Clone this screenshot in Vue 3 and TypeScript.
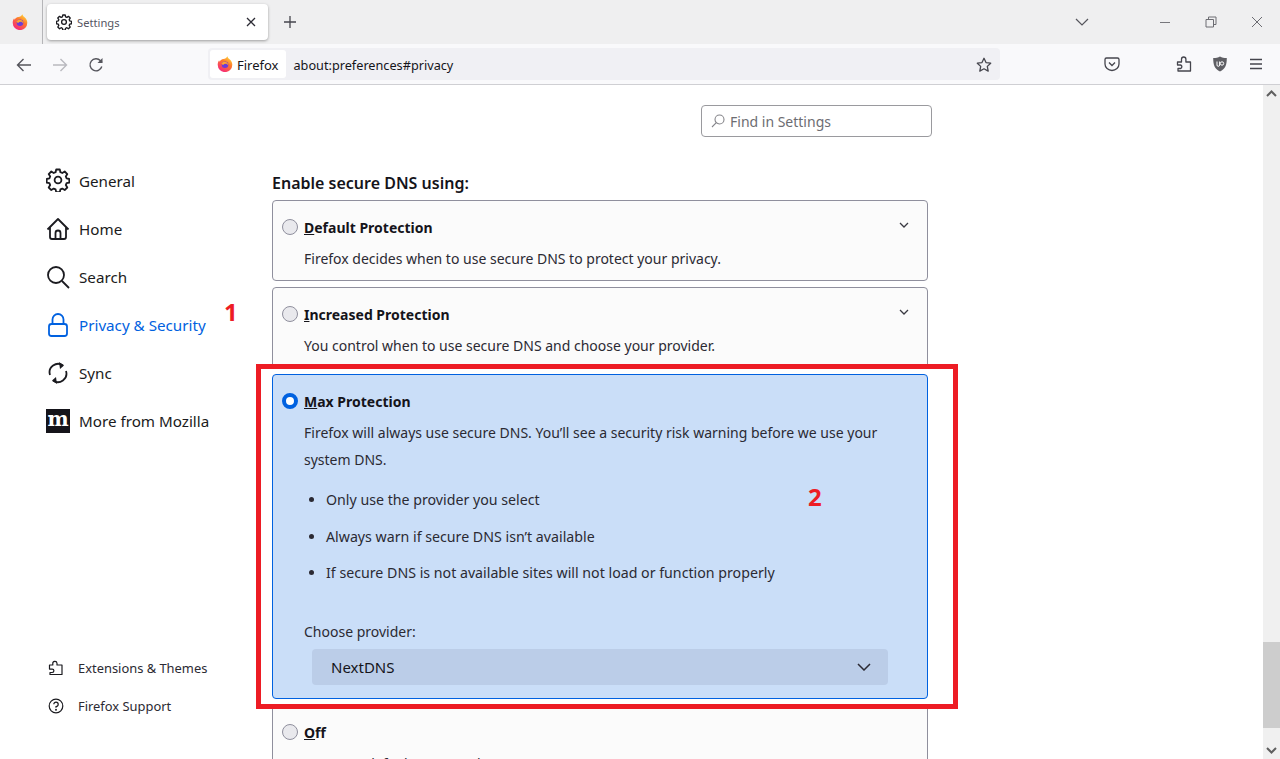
<script setup lang="ts">
const navItems = [
  { label: 'General', icon: 'gear' },
  { label: 'Home', icon: 'home' },
  { label: 'Search', icon: 'search' },
  { label: 'Privacy & Security', icon: 'lock', active: true },
  { label: 'Sync', icon: 'sync' },
  { label: 'More from Mozilla', icon: 'moz' }
]

const bullets = [
  'Only use the provider you select',
  'Always warn if secure DNS isn’t available',
  'If secure DNS is not available sites will not load or function properly'
]

const gearPath = 'M10.2 1.5h3.6l.6 2.7 1.9.8 2.4-1.5 2.6 2.6-1.5 2.4.8 1.9 2.7.6v3.6l-2.7.6-.8 1.9 1.5 2.4-2.6 2.6-2.4-1.5-1.9.8-.6 2.7h-3.6l-.6-2.7-1.9-.8-2.4 1.5-2.6-2.6 1.5-2.4-.8-1.9-2.7-.6v-3.6l2.7-.6.8-1.9-1.5-2.4 2.6-2.6 2.4 1.5 1.9-.8z'
</script>

<template>
  <div class="window">
    <header class="tabbar">
      <div class="tab-start">
        <svg class="fx" width="16" height="16" viewBox="0 0 16 16"><use href="#fx-logo" /></svg>
      </div>
      <div class="tab">
        <svg width="16" height="16" viewBox="0 0 24 24" fill="none" stroke="#1b1b20" stroke-width="2"><path :d="gearPath" stroke-linejoin="round" /><circle cx="12" cy="12" r="3.6" /></svg>
        <span class="tab-title">Settings</span>
        <svg class="tab-close" width="12" height="12" viewBox="0 0 12 12" stroke="#2b2a33" stroke-width="1.3"><path d="M2 2l8 8M10 2l-8 8" /></svg>
      </div>
      <svg class="new-tab" width="14" height="14" viewBox="0 0 14 14" stroke="#45454d" stroke-width="1.3"><path d="M7 1v12M1 7h12" /></svg>
      <div class="tab-spacer"></div>
      <svg class="tab-list" width="14" height="8" viewBox="0 0 14 8" fill="none" stroke="#55555c" stroke-width="1.2"><path d="M1 1l6 6 6-6" /></svg>
      <div class="win-controls">
        <svg width="12" height="12" viewBox="0 0 12 12" stroke="#77777c"><path d="M1 6.5h10" /></svg>
        <svg width="12" height="12" viewBox="0 0 12 12" fill="none" stroke="#6c6c72"><path d="M1 3.5h7.5V11H1zM3.5 3.5V1H11v7.500H8.500" /></svg>
        <svg width="12" height="12" viewBox="0 0 12 12" stroke="#6c6c72"><path d="M1 1l10 10M11 1L1 11" /></svg>
      </div>
    </header>

    <div class="toolbar">
      <svg class="tool first" width="16" height="16" viewBox="0 0 16 16" fill="none" stroke="#55555c" stroke-width="1.400"><path d="M15 8H1.500M7.500 2L1.500 8l6 6" /></svg>
      <svg class="tool" width="16" height="16" viewBox="0 0 16 16" fill="none" stroke="#b9b9bf" stroke-width="1.400"><path d="M1 8h13.500M8.500 2l6 6-6 6" /></svg>
      <svg class="tool" width="16" height="16" viewBox="0 0 16 16" fill="none" stroke="#55555c" stroke-width="1.400"><path d="M13.800 9.500A6 6 0 1 1 12.500 3.800L14 5.500" /><path d="M14.500 1v5h-5" fill="#55555c" stroke="none" /></svg>
      <div class="urlbar">
        <div class="identity">
          <svg width="16" height="16" viewBox="0 0 16 16"><use href="#fx-logo" /></svg>
          <span class="identity-label">Firefox</span>
        </div>
        <span class="url">about:preferences#privacy</span>
        <svg class="star" width="16" height="16" viewBox="0 0 16 16" fill="none" stroke="#45454d" stroke-width="1.300" stroke-linejoin="round"><path d="M8 1.300l2 4.300 4.700.6-3.400 3.200.9 4.700L8 11.800l-4.200 2.300.9-4.700L1.300 6.200 6 5.600z" /></svg>
      </div>
      <div class="toolbar-right">
        <svg class="pocket" width="16" height="16" viewBox="0 0 16 16" fill="none" stroke="#45454d" stroke-width="1.300"><path d="M2.500 2h11A1.500 1.500 0 0 1 15 3.500V8a7 6.500 0 0 1-14 0V3.500A1.500 1.500 0 0 1 2.500 2z" /><path d="M5 6.500l3 3 3-3" /></svg>
        <svg class="puzzle" width="16" height="16" viewBox="0 0 16 16" fill="none" stroke="#45454d" stroke-width="1.300" stroke-linejoin="round"><path d="M1.500 6h4V3.200a2.200 2.200 0 0 1 4.400 0V6h4.600v9H2v-2.500h2.500a1.800 1.800 0 0 0 0-3.500H1.500z" /></svg>
        <svg class="ublock" width="16" height="16" viewBox="0 0 16 16"><path d="M8 .5c2 1.200 4 1.600 6.800 1.600 0 7-1.500 11-6.800 13.400C2.700 13.100 1.200 9.100 1.200 2.100 4 2.100 6 1.700 8 .5z" fill="#5f5f64" /><path d="M5 5.500V9a1.300 1.300 0 0 0 2.600 0V5.500" fill="none" stroke="#fff" stroke-width="1" /><circle cx="10" cy="7.500" r="1.700" fill="none" stroke="#fff" stroke-width="1" /></svg>
        <svg class="menu" width="14" height="12" viewBox="0 0 14 12" stroke="#45454d" stroke-width="1.300"><path d="M1 1.500h12M1 6h12M1 10.500h12" /></svg>
      </div>
    </div>

    <div class="viewport">
      <div class="page">
        <aside class="sidebar">
          <nav class="nav">
            <div v-for="item in navItems" :key="item.label" :class="['nav-item', { active: item.active }]">
              <svg v-if="item.icon === 'gear'" class="gear" width="24" height="24" viewBox="0 0 24 24" fill="none" stroke="#1b1b20" stroke-width="1.800"><path :d="gearPath" stroke-linejoin="round" /><circle cx="12" cy="12" r="3.400" /></svg>
              <svg v-else-if="item.icon === 'home'" width="24" height="24" viewBox="0 0 24 24" fill="none" stroke="#1b1b20" stroke-width="1.800" stroke-linejoin="round"><path d="M1.500 12.500L12 2l10.500 10.500M4 10v10a2 2 0 0 0 2 2h12a2 2 0 0 0 2-2V10" /><path d="M9.500 22v-6a2.500 2.500 0 0 1 5 0v6" /></svg>
              <svg v-else-if="item.icon === 'search'" width="24" height="24" viewBox="0 0 24 24" fill="none" stroke="#1b1b20" stroke-width="1.800"><circle cx="10" cy="10" r="8" /><path d="M16 16l7 7" /></svg>
              <svg v-else-if="item.icon === 'lock'" width="24" height="24" viewBox="0 0 24 24" fill="none" stroke="#0061e0" stroke-width="1.800"><rect x="3" y="11" width="18" height="12" rx="2.500" /><path d="M6.500 11V6.500a5.500 5.500 0 0 1 11 0V11" /></svg>
              <svg v-else-if="item.icon === 'sync'" width="24" height="24" viewBox="0 0 24 24" fill="none" stroke="#1b1b20" stroke-width="1.800"><path d="M4 14a8.500 8.500 0 0 1 13-9.500M20 10a8.500 8.500 0 0 1-13 9.500" /><path d="M13 1l5 3.500-4 3.500zM11 23l-5-3.500 4-3.500z" fill="#1b1b20" stroke="none" /></svg>
              <span v-else class="moz-icon">m</span>
              <span>{{ item.label }}</span>
            </div>
          </nav>
          <div class="footer-links">
            <div class="foot-item">
              <svg width="16" height="16" viewBox="0 0 16 16" fill="none" stroke="#1b1b20" stroke-width="1.200" stroke-linejoin="round"><path d="M1.500 5h3.300V3.800a2.100 2.100 0 1 1 4.200-.5V5H14v9.500H2V12.500h2.200a1.700 1.700 0 0 0 0-3.400H1.500z" /></svg>
              <span>Extensions &amp; Themes</span>
            </div>
            <div class="foot-item">
              <svg width="16" height="16" viewBox="0 0 16 16" fill="none" stroke="#1b1b20" stroke-width="1.200"><circle cx="8" cy="8" r="6.800" /><path d="M5.800 6.300A2.200 2.200 0 1 1 8 8.500v1.200" /><circle cx="8" cy="11.800" r=".4" fill="#1b1b20" /></svg>
              <span>Firefox Support</span>
            </div>
          </div>
          <span class="callout callout-one">1</span>
        </aside>

        <main class="content">
          <div class="search-row">
            <div class="search-box">
              <svg width="14" height="14" viewBox="0 0 14 14" fill="none" stroke="#85858a" stroke-width="1.100"><circle cx="8.500" cy="5.500" r="4.500" /><path d="M5.300 8.700L1 13" /></svg>
              <span>Find in Settings</span>
            </div>
          </div>
          <h2 class="section-title">Enable secure DNS using:</h2>

          <section class="option">
            <div class="option-head">
              <span class="radio"></span>
              <span class="option-title"><u>D</u>efault Protection</span>
              <svg class="chev" width="10" height="6" viewBox="0 0 10 6" fill="none" stroke="#3a3a42" stroke-width="1.300"><path d="M1 1l4 4 4-4" /></svg>
            </div>
            <p class="option-text">Firefox decides when to use secure DNS to protect your privacy.</p>
          </section>

          <section class="option">
            <div class="option-head">
              <span class="radio"></span>
              <span class="option-title"><u>I</u>ncreased Protection</span>
              <svg class="chev" width="10" height="6" viewBox="0 0 10 6" fill="none" stroke="#3a3a42" stroke-width="1.300"><path d="M1 1l4 4 4-4" /></svg>
            </div>
            <p class="option-text">You control when to use secure DNS and choose your provider.</p>
          </section>

          <section class="option selected">
            <div class="option-head">
              <span class="radio on"></span>
              <span class="option-title"><u>M</u>ax Protection</span>
            </div>
            <p class="option-text">Firefox will always use secure DNS. You’ll see a security risk warning before we use your system DNS.</p>
            <ul class="bullets">
              <li v-for="b in bullets" :key="b">{{ b }}</li>
            </ul>
            <div class="provider-label">Choose provider:</div>
            <div class="select">
              <span>NextDNS</span>
              <svg width="14" height="8" viewBox="0 0 14 8" fill="none" stroke="#2b2a33" stroke-width="1.500"><path d="M1 1l6 6 6-6" /></svg>
            </div>
          </section>

          <section class="option">
            <div class="option-head">
              <span class="radio"></span>
              <span class="option-title"><u>O</u>ff</span>
            </div>
            <p class="option-text">Use your default DNS resolver</p>
          </section>

          <div class="red-box"></div>
          <span class="callout callout-two">2</span>
        </main>
      </div>

      <div class="scrollbar">
        <svg width="11" height="7" viewBox="0 0 11 7" fill="none" stroke="#5f5f5f" stroke-width="2"><path d="M1 6l4.500-4.500L10 6" /></svg>
        <div class="scroll-track"><div class="scroll-thumb"></div></div>
        <svg width="11" height="7" viewBox="0 0 11 7" fill="none" stroke="#5f5f5f" stroke-width="2"><path d="M1 1l4.500 4.500L10 1" /></svg>
      </div>
    </div>

    <svg class="defs" width="0" height="0">
      <defs>
        <linearGradient id="fx-outer" x1="0.8" y1="0.05" x2="0.25" y2="0.95">
          <stop offset="0" stop-color="#ffd23a" />
          <stop offset="0.4" stop-color="#ff7a2b" />
          <stop offset="1" stop-color="#f5277a" />
        </linearGradient>
        <symbol id="fx-logo" viewBox="0 0 16 16">
          <path d="M10.500.300c.1 1.700 1.300 2.300 2.300 3.200 1 1 2.500 2.600 2.500 5.300a7.300 7.300 0 1 1-14.600 0c0-2 .6-3.500 1.400-4.600l.4 1.500C3.300 4.500 4.600 3.300 6.400 3.100 8 2.900 9.600 1.800 10.500.300z" fill="url(#fx-outer)" />
          <circle cx="8" cy="8.700" r="3.300" fill="#6d3bd8" />
          <path d="M4.500 7.500c1-1.800 3.500-2.400 5.200-1.200 1.100.8 1.500 1.900 1.400 3-.5-1-1.500-1.600-2.600-1.500-1 0-1.800.4-2.300 1.100-.6-.1-1.300-.6-1.700-1.400z" fill="#ffa52e" />
        </symbol>
      </defs>
    </svg>
  </div>
</template>

<style>
html, body {
  margin: 0;
  height: 100%;
  overflow: hidden;
  background: #fff;
}
</style>

<style scoped>
.window {
  display: flex;
  flex-direction: column;
  height: 759px;
  width: 1280px;
  overflow: hidden;
  font-family: "Noto Sans", "Open Sans", sans-serif;
  color: #15141a;
  background: #fff;
}

.defs { position: absolute; }

/* TABS */
.tabbar {
  height: 44px;
  flex-shrink: 0;
  display: flex;
  align-items: center;
  background: #efeff0;
}
.tab-start {
  width: 42px;
  height: 44px;
  border-right: 1px solid #b5b5b8;
  display: flex;
  align-items: center;
  justify-content: center;
}
.fx { margin-left: -3px; }
.tab {
  width: 221px;
  height: 36px;
  margin-left: 4px;
  background: #fff;
  border-radius: 4px;
  box-shadow: 0 1px 3px rgba(0, 0, 0, 0.35);
  display: flex;
  align-items: center;
  padding: 0 9px;
  box-sizing: border-box;
  gap: 5px;
}
.tab-title { font-size: 11.2px; color: #55555f; flex: 1; }
.tab-close { margin-right: 2px; }
.new-tab { margin-left: 15px; }
.tab-spacer { flex: 1; }
.tab-list { margin-right: 70px; }
.win-controls {
  display: flex;
  gap: 34px;
  margin-right: 17px;
}

/* TOOLBAR */
.toolbar {
  height: 41px;
  flex-shrink: 0;
  box-sizing: border-box;
  display: flex;
  align-items: center;
  background: #f9f9fb;
  border-bottom: 1px solid #cfcfd3;
}
.tool { margin-right: 20px; margin-top: 2px; }
.tool.first { margin-left: 16px; }
.urlbar {
  width: 792px;
  height: 32px;
  margin-left: 84px;
  background: #f0f0f4;
  border-radius: 4px;
  display: flex;
  align-items: center;
  box-sizing: border-box;
  padding: 2px;
}
.identity {
  height: 28px;
  background: #fff;
  border-radius: 3px;
  display: flex;
  align-items: center;
  gap: 4px;
  padding: 0 7px;
  font-size: 13px;
}
.identity-label { margin-top: 2px; }
.url { font-size: 12.7px; margin-left: 8px; margin-top: 2px; flex: 1; }
.star { margin-right: 6px; margin-top: 1px; }
.toolbar-right {
  display: flex;
  align-items: center;
  flex: 1;
}
.pocket { margin-left: 104px; }
.puzzle { margin-left: 56px; }
.ublock { margin-left: 20px; }
.menu { margin-left: 21px; }

/* PAGE */
.viewport {
  flex: 1;
  min-height: 0;
  display: flex;
}
.page {
  flex: 1;
  min-width: 0;
  display: flex;
  position: relative;
  overflow: hidden;
}
.sidebar {
  width: 272px;
  flex-shrink: 0;
  display: flex;
  flex-direction: column;
  justify-content: space-between;
  position: relative;
  box-sizing: border-box;
  padding: 72px 0 34px 46px;
}
.nav-item {
  height: 48px;
  display: flex;
  align-items: center;
  gap: 9px;
  font-size: 15.2px;
  color: #1b1b20;
}
.nav-item.active { color: #0061e0; }
.gear { margin-top: -2px; }
.moz-icon {
  width: 24px;
  height: 24px;
  background: #15141a;
  color: #fff;
  font-family: "DejaVu Serif", serif;
  font-weight: 700;
  font-size: 20px;
  line-height: 20px;
  text-align: center;
}
.foot-item {
  height: 38px;
  display: flex;
  align-items: center;
  gap: 14px;
  padding-left: 2px;
  font-size: 12.9px;
  color: #2b2a33;
}

.callout {
  position: absolute;
  color: #ed1c24;
  font-family: "Open Sans", sans-serif;
  font-weight: 700;
  font-size: 24px;
  line-height: 1;
}
.callout-one { left: 224px; top: 215px; }
.callout-two { left: 536px; top: 400px; }

/* CONTENT */
.content {
  width: 656px;
  flex-shrink: 0;
  position: relative;
}
.search-row {
  display: flex;
  justify-content: flex-end;
  margin-right: -4px;
  padding-top: 20px;
}
.search-box {
  width: 231px;
  height: 32px;
  box-sizing: border-box;
  border: 1px solid #9a9a9e;
  border-radius: 4px;
  display: flex;
  align-items: center;
  gap: 5px;
  padding-left: 9px;
  font-size: 14px;
  color: #6d6d72;
}
.section-title {
  margin: 0;
  font-size: 16px;
  font-weight: 600;
  line-height: 22px;
  padding-top: 35px;
  padding-bottom: 6px;
}
.option {
  box-sizing: border-box;
  border: 1px solid #8f8f9d;
  border-radius: 4px;
  background: #fbfbfb;
  margin-bottom: 6px;
  height: 81px;
  padding: 0 9px;
}
.option.selected {
  height: 325px;
  background: #cadef8;
  border-color: #0061e0;
}
.option-head {
  height: 52px;
  display: flex;
  align-items: center;
  gap: 6px;
}
.radio {
  width: 16px;
  height: 16px;
  box-sizing: border-box;
  border: 1px solid #8f8f9d;
  background: #e9e9ed;
  border-radius: 50%;
  flex-shrink: 0;
}
.radio.on {
  background: #fff;
  border: 4px solid #0061e0;
}
.option-title { font-size: 14px; font-weight: 700; flex: 1; }
.chev { margin-right: 9px; margin-top: -5px; }
.option-text {
  margin: -8px 0 0 22px;
  font-size: 14px;
  line-height: 27px;
  color: #2b2a33;
  width: 590px;
}
.bullets {
  margin: 9px 0 0 22px;
  padding: 0 0 0 22px;
  font-size: 14.2px;
  color: #2b2a33;
}
.bullets li { height: 36.500px; line-height: 36.500px; }
.provider-label {
  margin: 30px 0 0 22px;
  font-size: 14px;
  line-height: 20px;
  color: #2b2a33;
}
.select {
  margin: 7px 30px 0 30px;
  height: 36px;
  background: #bbcde8;
  border-radius: 4px;
  display: flex;
  align-items: center;
  justify-content: space-between;
  padding: 0 17px 0 19px;
  font-size: 15px;
}

.red-box {
  position: absolute;
  left: -16px;
  top: 279px;
  width: 702px;
  height: 345px;
  box-sizing: border-box;
  border: 5px solid #ed1c24;
}

/* SCROLLBAR */
.scrollbar {
  width: 17px;
  flex-shrink: 0;
  background: #f0f0f0;
  display: flex;
  flex-direction: column;
  align-items: center;
  padding: 5px 0;
  box-sizing: border-box;
}
.scroll-track {
  flex: 1;
  width: 100%;
  display: flex;
  flex-direction: column;
  justify-content: flex-end;
  padding-bottom: 19px;
}
.scroll-thumb {
  height: 86px;
  background: #cdcdcd;
}
</style>
